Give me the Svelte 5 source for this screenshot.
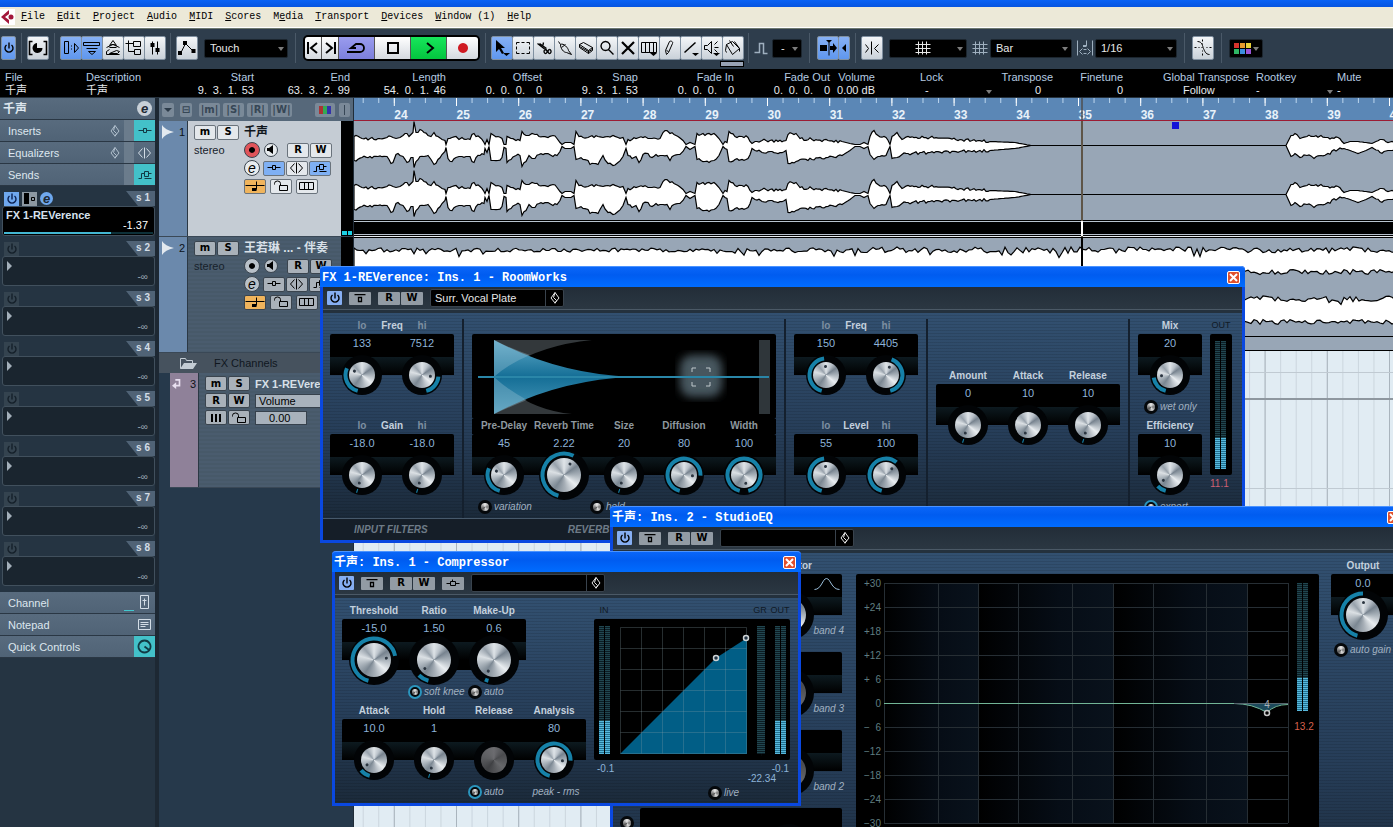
<script>
    const menus = ['File', 'Edit', 'Project', 'Audio', 'MIDI', 'Scores', 'Media', 'Transport', 'Devices', 'Window (1)', 'Help'];
    // index of the underlined access key
    const hot = { Media: 1 };

    // s = stroked path, f = filled path, k = stroke width
    const icons = {
        power: { w: 12, h: 12, s: 'M5.500 0v6M3 2.500a4 4 0 1 0 5 0', k: 1.4 },
        clock: { w: 20, h: 18, s: 'M4 2H1v13h3M15 2h3v13h-3', k: 1.6, f: 'M9 4a5 5 0 1 0 5.500 5H9z' },
        inspector: { w: 20, h: 18, s: 'M3 2h4v12H3zM10 6v1M10 9v1M13 4v9l4-4.500z' },
        infoline: { w: 20, h: 18, s: 'M1 3h16v3H1zM4 9h11M6 12h7l-3.500 3z' },
        overview: { w: 20, h: 18, s: 'M6 6l3.500-5L13 6l-2-1H8zM3 8l6.500-3L16 8M6 8h7M3 12l3-2M13 11l3 1-2 2H6zM3 15h13M3 12v3' },
        racks: { w: 20, h: 18, s: 'M4 1v11h6M1 4h3M4 4h5M9 2h7v5H9zM10 10h6v5h-6z' },
        faders: { w: 20, h: 18, s: 'M7 2v13M12 2v13', f: 'M5.500 4h4v4h-4zM10.500 9h4v4h-4z' },
        prefader: { w: 13, h: 11, s: 'M8 4h3v3H8z', f: 'M1 0h5v11H1z' },
        automation: { w: 20, h: 18, s: 'M3 14L8 4l8 8', f: 'M1 12h4v4H1zM6 2h4v4H6zM14.500 10h4v4h-4z' },
        prev: { w: 14, h: 14, s: 'M2 1v12M11 2L5 7l6 5', k: 2 },
        next: { w: 14, h: 14, s: 'M12 1v12M3 2l6 5-6 5', k: 2 },
        cycle: { w: 22, h: 12, s: 'M1 10h13a4 4 0 0 0 4-4a4 4 0 0 0-4-4h-4L5 6h5', k: 1.8 },
        stop: { w: 14, h: 14, s: 'M2 2h10v10H2z', k: 2 },
        play: { w: 14, h: 14, s: 'M5 2l6 5-6 5', k: 2 },
        rec: { w: 14, h: 14, f: 'M7 2a5 5 0 1 0 .01 0z' },
        arrow: { w: 20, h: 20, f: 'M4 2v12l3-3 3 5 2-1-3-5h4zM11 15h7l-3.500 3z' },
        range: { w: 20, h: 20, s: 'M3 4h3M8 4h3M13 4h3M3 15h3M8 15h3M13 15h3M3 4v2M3 8v3M3 13v2M16 4v2M16 8v3M16 13v2' },
        split: { w: 20, h: 20, s: 'M3 5l9 7M9 4l-1 5M11 11a1.500 2 0 1 0 .1 0M15 11a1.500 2 0 1 0 .1 0M5 5l7 5', k: 1.3 },
        glue: { w: 20, h: 20, s: 'M3 3l2 3M5 6c3-2 8 4 8 6l3 4-5-2c-3 0-6-4-6-8zM6 9l4-3' },
        erase: { w: 20, h: 20, s: 'M3 6l4-2 9 5-4 3zM3 6v3l9 6 4-3V9M12 12v3M3 8l9 5 4-2' },
        zoom: { w: 20, h: 20, s: 'M8 3a4.500 4.500 0 1 0 .01 0M11 11l5 5', k: 1.4 },
        mute: { w: 20, h: 20, s: 'M4 4l12 12M16 4L4 16', k: 2.2 },
        warp: { w: 20, h: 20, s: 'M2 4h15v10H2zM6 4v10M10 4v10M14 4v10', f: 'M11 15h7l-3.500 3z' },
        pencil: { w: 20, h: 20, s: 'M6 16l-1-4 4-9c1-1 4 0 3 2l-4 9zM6 12l2 1' },
        line: { w: 20, h: 20, s: 'M3 14L14 4', k: 1.5, f: 'M11 15h7l-3.500 3z' },
        listen: { w: 20, h: 20, s: 'M2 7h3l4-4v12l-4-4H2zM12 6l3-3M12 9h4M12 11l3 3', f: 'M11 15h7l-3.500 3z' },
        bucket: { w: 20, h: 20, s: 'M3 6l6-3 7 7-7 6zM3 6L2 12l1 2M6 2l4 6M11 3l5 7v3' },
        step: { w: 14, h: 16, s: 'M0 12h5V3h4v10h4', k: 1.5 },
        autoscroll: { w: 20, h: 18, s: 'M10.500 3v13', f: 'M2 6h7v6H2zM8 1h6l-3 3zM12 7h3V4l4 5-4 5v-3h-3z' },
        left: { w: 8, h: 14, f: 'M6 3v8L2 7z' },
        snap: { w: 18, h: 18, s: 'M8 2v13M2 5l3 4-3 4M15 5l-4 4 4 4' },
        hash: { w: 16, h: 16, s: 'M3 1v13M7 1v13M11 1v13M0 4h15M0 8h15M0 12h15' },
        quant: { w: 16, h: 18, s: 'M0 1v15M15 1v15M9 1v6M5 9l-3 3 3 3M10 9l3 3-3 3M6 10h3M6 14h3', f: 'M6 6h3v2H6z' },
        cross: { w: 20, h: 20, s: 'M4 3c5 0 5 5 6 7s2 6 6 6M1 9h2M5 9h1M8 9h1M13 9h1M16 9h2M9 1v2M9 5v1M9 12v1M9 15v2' },
        diamond: { w: 10, h: 12, s: 'M4.500 0l4 5.500-4 5-4-5zM4.500 0L3 5l3 3-1.500 3' },
        inserts: { w: 16, h: 8, s: 'M1 3h5M9 3h5M6 1h3v4H6z' },
        eq: { w: 16, h: 12, s: 'M7 0v11M5 1L1 5.500 5 10M9 1l4 4.500L9 10' },
        sends: { w: 16, h: 10, s: 'M1 8h3V3h3M7 1h4v5H7zM11 3h3M7 8h7' },
        bypass: { w: 14, h: 9, s: 'M1 0h11M5 3h3v4H5z', k: 1.3 },
        side: { w: 16, h: 9, s: 'M1 4h4M10 4h4M5 2h5v4H5zM7 0v2' },
        note: { w: 20, h: 12, s: 'M0 5h19M11 1v8', f: 'M7 8h4.500v3H7z' },
        lock: { w: 16, h: 12, s: 'M6 5h8v5H6zM7 5V3a3 2.500 0 0 0-6 0v1' },
        lanes: { w: 16, h: 9, s: 'M0 0h14v7H0zM5 0v7M9 0v7' },
        bars: { w: 10, h: 8, f: 'M0 0h2v8H0zM4 0h2v8H4zM8 0h2v8H8z' },
        speaker: { w: 10, h: 10, f: 'M1 3h2l4-3v9L3 6H1z' },
        dot: { w: 10, h: 10, f: 'M5 2a3 3 0 1 0 .01 0z' },
        strip: { w: 10, h: 15, s: 'M0 0h8v13H0zM4 3v7M2 5h4' },
        pad: { w: 14, h: 12, s: 'M0 0h12v10H0zM2 3h8M2 5h8M2 7h5' },
        quick: { w: 16, h: 16, s: 'M7.500 1.500a6 6 0 1 0 .01 0M7.500 7.500l4 3', k: 1.8 },
        folder: { w: 18, h: 13, s: 'M1 11V1h5l1 2h6v3', f: 'M5 6h13l-4 6H1z' },
        fxret: { w: 12, h: 14, s: 'M4 2h5v7H4', k: 2, f: 'M0 9l5-4v8z' },
        bell: { w: 26, h: 14, s: 'M0 12c7 0 8-11 12-11s5 11 13 11' }
    };

    const views = ['inspector', 'infoline', 'overview', 'racks', 'faders'];
    const tools = ['arrow', 'range', 'split', 'glue', 'erase', 'zoom', 'mute', 'warp', 'pencil', 'line', 'listen', 'bucket'];
    const swatches = ['#d8342c', '#e79a2c', '#e8d038', '#2fb765', '#3b8fe0', '#9a55d8'];

    const times = [
        ['Start', '9.', '3.', '1.', '53'],
        ['End', '63.', '3.', '2.', '99'],
        ['Length', '54.', '0.', '1.', '46'],
        ['Offset', '0.', '0.', '0.', '0'],
        ['Snap', '9.', '3.', '1.', '53'],
        ['Fade In', '0.', '0.', '0.', '0'],
        ['Fade Out', '0.', '0.', '0.', '0']
    ];

    const slots = [1, 2, 3, 4, 5, 6, 7, 8];
    const tracks = [
        { n: 1, name: '千声', on: true },
        { n: 2, name: '王若琳 ... - 伴奏', on: false }
    ];

    // ruler
    const BAR = 62.2;
    const bars = Array.from({ length: 17 }, (_, i) => ({ n: 24 + i, x: 40.3 + i * BAR }));
    const beats = Array.from({ length: 76 }, (_, i) => 40.3 - BAR + (i * BAR) / 4);

    // vocal envelope: x, height above, height below the centre line
    const env = [
        0,9,15, 8,7,12, 16,7,11, 24,7,11, 33,8,11, 37,9,18, 39,8,17, 42,7,9, 46,8,10, 49,10,11, 53,12,17, 55,9,16, 57,11,12,
        59,13,12, 60,24,22, 62,13,16, 66,16,11, 70,13,11, 74,10,10, 77,9,14, 80,13,19, 84,9,14, 88,6,9, 91,5,6, 92,1,2, 94,7,13,
        98,8,16, 102,9,12, 105,6,11, 108,8,11, 112,6,11, 116,6,11, 118,11,16, 120,12,17, 122,9,12, 126,8,10, 130,3,9, 131,1,3,
        133,6,7, 135,1,1, 137,12,15, 140,10,15, 144,9,15, 148,7,12, 150,1,2, 152,1,3, 153,9,17, 157,7,14, 162,5,10, 166,5,10,
        168,14,21, 172,10,16, 175,10,10, 178,12,13, 181,11,13, 185,9,9, 189,9,9, 194,8,8, 199,10,11, 203,7,10, 206,3,6, 208,1,1,
        211,3,3, 217,3,3, 220,1,1, 222,14,14, 225,9,13, 229,8,14, 234,8,15, 236,9,19, 240,8,18, 244,9,19, 249,8,10, 254,9,18,
        259,10,20, 264,8,17, 269,8,11, 272,1,3, 274,6,10, 278,6,13, 282,7,11, 285,8,17, 289,8,9, 294,7,8, 298,7,12, 302,7,9,
        306,7,10, 309,13,10, 313,15,10, 316,12,15, 320,11,10, 324,9,9, 329,5,6, 332,1,1, 336,3,4, 341,1,1, 343,12,14, 347,11,15,
        351,10,16, 355,12,17, 360,12,15, 365,7,10, 369,1,1, 371,4,3, 373,3,4, 375,14,16, 381,9,14, 388,9,14, 394,8,13, 398,2,3,
        401,4,5, 408,5,7, 416,5,6, 424,4,8, 432,5,5, 434,11,18, 438,12,17, 442,12,16, 446,7,14, 458,6,14, 474,5,12, 488,4,10,
        496,2,5, 501,1,1, 506,1,1, 510,3,3, 514,1,1, 516,9,9, 520,15,14, 524,10,11, 532,8,10, 536,1,1, 538,9,13, 543,13,12,
        548,6,9, 554,9,8, 576,8,7, 606,6,6, 636,4,5, 661,3,3, 677,0,0, 932,0,0, 937,10,11, 941,12,8, 946,7,12, 953,9,10,
        960,9,13, 967,10,10, 974,8,8, 984,8,4, 990,2,3, 996,4,5, 1004,4,8, 1012,3,5, 1018,2,2, 1026,6,7, 1034,3,5, 1046,6,5,
        1060,8,8, 1090,5,6, 1120,7,9, 1160,4,5, 1200,6,7
    ];

    const noise = (i) => {
        const v = Math.sin(i * 12.9898) * 43758.5453;
        return v - Math.floor(v) - 0.5;
    };

    function vocal(cy) {
        const up = [];
        const down = [];
        let k = 0;
        for (let i = 0; i < env.length; i += 3) {
            const [x, u, d] = [env[i], env[i + 1], env[i + 2]];
            up.push([x, cy - u]);
            down.push([x, cy + d]);
            const nx = env[i + 3];
            if (nx === undefined) break;
            for (let m = x + 2; m < nx - 1; m += 2) {
                const t = (m - x) / (nx - x);
                const uu = u + (env[i + 4] - u) * t;
                const dd = d + (env[i + 5] - d) * t;
                const j = uu > 4 ? 3 : 0;
                up.push([m, cy - uu + noise(k++) * j]);
                down.push([m, cy + dd + noise(k++) * j]);
            }
        }
        return 'M' + [...up, ...down.reverse()].map((p) => p[0] + ' ' + p[1].toFixed(1)).join('L') + 'Z';
    }

    function backing(top, bottom, seed) {
        const up = [];
        const down = [];
        for (let x = 0; x < 1300; x += 3) {
            const s = x + seed;
            const spike = noise(s * 3) > 0.42 ? 5 : 0;
            const rough = x > 440 ? 6 : 4;
            up.push([x, top + noise(s) * rough + spike]);
            down.unshift([x, bottom + noise(s * 7) * 5]);
        }
        return 'M' + [...up, ...down].map((p) => p[0] + ' ' + p[1].toFixed(1)).join('L') + 'Z';
    }

    // knobs travel 330 degrees, starting left of six o'clock
    const angle = (v) => 195 + v * 330;
    function arc(r, a, b) {
        const p = (v) => {
            const t = (angle(v) * Math.PI) / 180;
            return (30 + r * Math.sin(t)).toFixed(2) + ' ' + (30 - r * Math.cos(t)).toFixed(2);
        };
        return `M${p(a)}A${r} ${r} 0 ${(b - a) * 330 > 180 ? 1 : 0} 1 ${p(b)}`;
    }

    const db = [30, 24, 18, 12, 6, 0, -6, -12, -18, -24, -30];
    const freqLines = [28, 82, 122, 162, 216, 257, 297, 350, 391, 432];
</script>

{#snippet ic(name)}
    {@const i = icons[name]}
    <svg class="ic" width={i.w} height={i.h} viewBox="0 0 {i.w} {i.h}" aria-hidden="true">
        {#if i.s}<path d={i.s} fill="none" stroke="currentColor" stroke-width={i.k ?? 1} transform={(i.k ?? 1) < 1.7 ? 'translate(.5 .5)' : undefined} />{/if}
        {#if i.f}<path d={i.f} fill="currentColor" />{/if}
    </svg>
{/snippet}

{#snippet drop(label, value, cls)}
    <span class="drop {cls}">
        <select aria-label={label}><option>{value}</option></select>
    </span>
{/snippet}

{#snippet knob(label, value, v, o = {})}
    <div class="cell">
        <span class="val">{value}</span>
        <div class="knob" class:big={o.big} role="slider" tabindex="0" aria-label={label} aria-valuenow={v * 100} aria-valuetext={value}>
            <svg width="60" height="60" viewBox="0 0 60 60">
                <circle cx="30" cy="30" r={o.big ? 25 : 20} fill="#020406" />
                {#if !o.off}
                    <path d={arc(o.big ? 21.5 : 16.5, o.rev ? v : 0, o.rev ? 1 : Math.max(v, 0.012))} fill="none" stroke="#1681a8" stroke-width="4" />
                {/if}
            </svg>
            <div class="metal" class:off={o.off}>
                {#if !o.off}<i style="transform: rotate({angle(v)}deg)"></i>{/if}
            </div>
        </div>
    </div>
{/snippet}

{#snippet opt(text, on, cls = '')}
    <label class="opt {cls}"><input type="checkbox" checked={on} />{text}</label>
{/snippet}

{#snippet meter(x, y, h, lit, n = 2)}
    {#each n === 2 ? [x + 2.5, x + 8.5] : [x + 4] as cx}
        <path d="M{cx} {y}v{h}" stroke="#0c1d24" stroke-width={n === 2 ? 5 : 8} />
        <path d="M{cx} {y}v{h}" stroke="#214750" stroke-width={n === 2 ? 5 : 8} stroke-dasharray="1 1" />
        <path d="M{cx} {y + h - lit}v{lit}" stroke="#22708f" stroke-width="5" />
        <path d="M{cx} {y + h - lit}v{lit}" stroke="#58b8dc" stroke-width="5" stroke-dasharray="1 1" />
    {/each}
{/snippet}

{#snippet chrome(title, preset, side)}
    <header class="title">
        <h2>{title}</h2>
        <button class="close" aria-label="Close"><svg width="9" height="9" viewBox="0 0 9 9"><path d="M1 1l7 7M8 1L1 8" stroke="#fff" stroke-width="2" /></svg></button>
    </header>
    <div class="plugbar">
        <button class="mini blue sq" aria-label="Power">{@render ic('power')}</button>
        <button class="mini" aria-label="Bypass">{@render ic('bypass')}</button>
        <div class="pair">
            <button class="mini">R</button>
            <button class="mini">W</button>
        </div>
        {#if side}<button class="mini" aria-label="Side-chain">{@render ic('side')}</button>{/if}
        <span class="preset">
            <select aria-label="Preset"><option>{preset}</option></select>
            <span>{@render ic('diamond')}</span>
        </span>
    </div>
{/snippet}

<div class="app">
    <div class="winedge"></div>
    <nav class="menu">
        <svg width="15" height="16" viewBox="0 0 15 16" aria-hidden="true">
            <path d="M0 0h15v16H0z" fill="#fff" />
            <path d="M9 1L1 8l8 7V11L5 8l4-3z" fill="#a3173a" />
            <circle cx="11" cy="8" r="2.500" fill="#a3173a" />
        </svg>
        {#each menus as m}
            {@const k = hot[m] ?? 0}
            <a href="#{m}">{m.slice(0, k)}<u>{m[k]}</u>{m.slice(k + 1)}</a>
        {/each}
    </nav>

    <div class="toolbar">
        <button class="tb blue slim" aria-label="Activate project">{@render ic('power')}</button>
        <i class="sep"></i>
        <button class="tb" aria-label="Constrain delay">{@render ic('clock')}</button>
        <i class="sep"></i>
        <div class="set">
            {#each views as v, i}
                <button class="tb" class:blue={i < 2} aria-label={v}>{@render ic(v)}</button>
            {/each}
        </div>
        <i class="sep"></i>
        <button class="tb" aria-label="Automation panel">{@render ic('automation')}</button>
        {@render drop('Automation mode', 'Touch', 'w84 ml')}
        <i class="sep wide"></i>
        <div class="transport">
            <button class="half" aria-label="Previous">{@render ic('prev')}</button>
            <button class="half" aria-label="Next">{@render ic('next')}</button>
            <button class="cycle" aria-label="Cycle">{@render ic('cycle')}</button>
            <button aria-label="Stop">{@render ic('stop')}</button>
            <button class="play" aria-label="Play">{@render ic('play')}</button>
            <button class="rec" aria-label="Record">{@render ic('rec')}</button>
        </div>
        <i class="sep"></i>
        <div class="set tools">
            {#each tools as t, i}
                <button class="tb" class:blue={i === 0} aria-label={t}>{@render ic(t)}</button>
            {/each}
        </div>
        <i class="sep"></i>
        {@render ic('step')}
        {@render drop('Nudge', '-', 'w30 dash')}
        <i class="sep wide"></i>
        <div class="set">
            <button class="tb blue" aria-label="Auto-scroll">{@render ic('autoscroll')}</button>
            <button class="tb blue thin" aria-label="Suspend auto-scroll">{@render ic('left')}</button>
        </div>
        <i class="sep"></i>
        <button class="tb" aria-label="Snap">{@render ic('snap')}</button>
        <button class="drop pick w78 ml" aria-label="Snap type" aria-haspopup="listbox">{@render ic('hash')}</button>
        <span class="pre">{@render ic('hash')}</span>
        {@render drop('Grid type', 'Bar', 'w82')}
        <span class="pre">{@render ic('quant')}</span>
        {@render drop('Quantize', '1/16', 'w82')}
        <i class="sep wide"></i>
        <button class="tb" aria-label="Zero crossings">{@render ic('cross')}</button>
        <i class="sep wide"></i>
        <button class="drop pick w34" aria-label="Colors" aria-haspopup="listbox">
            <span class="swatches">{#each swatches as c}<b style="background: {c}"></b>{/each}</span>
        </button>
    </div>

    <dl class="info">
        <div class="file"><dt>File</dt><dd>千声</dd></div>
        <div class="desc"><dt>Description</dt><dd>千声</dd></div>
        {#each times as t}
            <div class="time"><dt>{t[0]}</dt><dd>{#each t.slice(1) as p}<span>{p}</span>{/each}</dd></div>
        {/each}
        <div class="vol"><dt>Volume</dt><dd>0.00 dB</dd></div>
        <div class="lockc more"><dt>Lock</dt><dd>-</dd></div>
        <div class="trans"><dt>Transpose</dt><dd>0</dd></div>
        <div class="fine"><dt>Finetune</dt><dd>0</dd></div>
        <div class="glob"><dt>Global Transpose</dt><dd>Follow</dd></div>
        <div class="root more"><dt>Rootkey</dt><dd>-</dd></div>
        <div class="mutec"><dt>Mute</dt><dd>-</dd></div>
    </dl>

    <div class="work">
        <aside class="inspector">
            <div class="row name"><b>千声</b><button class="e" aria-label="Edit channel">e</button></div>
            <div class="row">Inserts{@render ic('diamond')}<i></i><span class="tag teal">{@render ic('inserts')}</span></div>
            <div class="row">Equalizers{@render ic('diamond')}<i></i><span class="tag">{@render ic('eq')}</span></div>
            <div class="row">Sends<i></i><span class="tag teal">{@render ic('sends')}</span></div>
            <div class="slots">
                {#each slots as s}
                    <section class="slot" class:used={s === 1}>
                        <header>
                            <button class="pw" aria-label="Send {s} power">{@render ic('power')}</button>
                            {#if s === 1}
                                <button class="pw pf" aria-label="Pre-fader">{@render ic('prefader')}</button>
                                <button class="e blue" aria-label="Edit send">e</button>
                            {/if}
                            <span class="num">s {s}</span>
                        </header>
                        <div class="box">
                            {#if s === 1}
                                <b>FX 1-REVerence</b><span>-1.37</span>
                                <div class="level"><i></i></div>
                            {:else}
                                <em></em><small>-∞</small>
                            {/if}
                        </div>
                    </section>
                {/each}
            </div>
            <div class="row">Channel<u></u><span class="tag">{@render ic('strip')}</span></div>
            <div class="row">Notepad<span class="tag">{@render ic('pad')}</span></div>
            <div class="row">Quick Controls<span class="tag teal">{@render ic('quick')}</span></div>
        </aside>

        <section class="tracks">
            <div class="thead">
                <button class="gh tri" aria-label="Track menu"></button>
                <button class="gh" aria-label="List">⊟</button>
                {#each ['m', 'S', 'R', 'W'] as g}<button class="gh wd">|{g}|</button>{/each}
                <button class="gh col" aria-label="Track colors"><b class="r"></b><b class="g"></b><b class="b"></b></button>
                <button class="gh nar" aria-label="Divide"><i></i></button>
            </div>
            {#each tracks as t}
                <article class="track" class:sel={t.on}>
                    <div class="stripe">
                        <svg width="14" height="14" viewBox="0 0 14 14"><path d="M1 0q3 5 12 7q-9 2-12 7z" fill="#e3e9ef" /></svg>
                        {t.n}
                    </div>
                    <div class="ctl">
                        <div class="ln"><div class="lead"><button class="tk">m</button><button class="tk">S</button></div><b>{t.name}</b></div>
                        <div class="ln">
                            <span class="lead">stereo</span>
                            <button class="rd red" aria-label="Record enable">{@render ic('dot')}</button>
                            <button class="rd sp" aria-label="Monitor">{@render ic('speaker')}</button>
                            <button class="tk">R</button><button class="tk">W</button>
                        </div>
                        <div class="ln">
                            <span class="lead"></span>
                            <button class="rd ee" aria-label="Edit channel">e</button>
                            <button class="tk act" aria-label="Inserts">{@render ic('inserts')}</button>
                            <button class="tk" aria-label="EQ">{@render ic('eq')}</button>
                            <button class="tk act" aria-label="Sends">{@render ic('sends')}</button>
                        </div>
                        <div class="ln sparse">
                            <span class="lead"></span>
                            <button class="tk orange" aria-label="Time base">{@render ic('note')}</button>
                            <button class="tk" aria-label="Lock">{@render ic('lock')}</button>
                            <button class="tk" aria-label="Lanes">{@render ic('lanes')}</button>
                        </div>
                    </div>
                    <div class="vu"></div>
                </article>
            {/each}
            <div class="fxhead"><span>{@render ic('folder')}</span>FX Channels</div>
            <article class="track fx">
                <div class="stripe">{@render ic('fxret')}3</div>
                <div class="ctl">
                    <div class="ln"><button class="tk">m</button><button class="tk">S</button><b>FX 1-REVerence</b></div>
                    <div class="ln"><button class="tk">R</button><button class="tk">W</button><span class="param">Volume</span></div>
                    <div class="ln"><button class="tk" aria-label="Lanes">{@render ic('bars')}</button><button class="tk" aria-label="Lock">{@render ic('lock')}</button><span class="param num">0.00</span></div>
                </div>
            </article>
        </section>

        <section class="arrange">
            <svg class="ruler" width="100%" height="24">
                {#each beats as x}<path d="M{x} 0v5" stroke="#bcd6ee" />{/each}
                {#each bars as b}
                    <path d="M{b.x} 0v8" stroke="#fff" />
                    <text x={b.x} y="21">{b.n}</text>
                {/each}
                <path d="M728 0v22" stroke="#4d4a48" stroke-width="2" stroke-opacity=".7" />
                <rect y="22" width="100%" height="1" fill="#9c1c33" />
            </svg>
            <svg class="lanes" width="100%" height="100%">
                <rect width="100%" height="231" fill="#98a6b6" />
                <path d={vocal(24.5)} fill="#fff" stroke="#000" stroke-width="1.200" />
                <path d={vocal(73.5)} fill="#fff" stroke="#000" stroke-width="1.200" />
                <rect y="99" width="100%" height="18" fill="#000" />
                <rect y="100" width="100%" height="1" fill="#b8c2cd" />
                <rect y="113" width="100%" height="1" fill="#b8c2cd" />
                <rect y="115" width="100%" height="1" fill="#e8ecf0" />
                <path d={backing(129, 151, 0)} fill="#fff" stroke="#000" stroke-width="1.200" />
                <path d={backing(178, 201, 90)} fill="#fff" stroke="#000" stroke-width="1.200" />
                <rect y="215" width="100%" height="1" fill="#000" />
                <rect y="229" width="100%" height="1" fill="#000" />
                <rect y="230" width="100%" height="100%" fill="#e1ecf3" />
                {#each beats as x}<path d="M{x} 230v900" stroke="#cbd6de" />{/each}
                {#each bars as b}<path d="M{b.x} 230v900" stroke="#a9b4bd" />{/each}
                <rect y="251" width="100%" height="1" fill="#c0cad2" />
                <rect y="277" width="100%" height="2" fill="#8e979f" />
                <rect y="367" width="100%" height="1" fill="#c0cad2" />
                <rect x="818" y="1" width="7" height="7" fill="#1414d8" />
                <path d="M728 0v1000" stroke="#5e5548" stroke-width="2" />
                <path d="M728 100v15" stroke="#fff" stroke-width="2" />
                <path d="M728 116v30" stroke="#000" stroke-width="2" />
            </svg>
        </section>
    </div>

    <section class="win room">
        {@render chrome('FX 1-REVerence: Ins. 1 - RoomWorks', 'Surr. Vocal Plate', false)}
        <div class="face">
            <div class="col">
                <div class="labels"><span class="dim">lo</span><span class="mid">Freq</span><span class="dim">hi</span></div>
                <div class="panel">{@render knob('Freq lo', '133', 0.3)}{@render knob('Freq hi', '7512', 0.79, { rev: true })}</div>
                <div class="opts"></div>
                <div class="labels"><span class="dim">lo</span><span class="mid">Gain</span><span class="dim">hi</span></div>
                <div class="panel">{@render knob('Gain lo', '-18.0', 0)}{@render knob('Gain hi', '-18.0', 0)}</div>
            </div>
            <i class="rule"></i>
            <div class="col">
                <div class="labels"></div>
                <svg class="space" width="304" height="85" viewBox="0 0 304 85">
                    <defs>
                        <linearGradient id="tail" x1="0" y1="0" x2="0" y2="1"><stop offset="0" stop-color="#5fa9c8" /><stop offset=".5" stop-color="#146e96" /><stop offset="1" stop-color="#4b9abb" /></linearGradient>
                        <filter id="haze"><feGaussianBlur stdDeviation="4" /></filter>
                    </defs>
                    <path d="M22 6h98Q60 12 22 43Q55 76 100 80H22z" fill="#33383b" />
                    <path d="M22 6Q85 40 160 43Q85 46 22 80z" fill="url(#tail)" />
                    <path d="M22 6v37Q36 30 58 21Q40 15 22 6zM22 80Q40 72 55 66Q36 56 22 43z" fill="#9cc4d4" fill-opacity=".35" />
                    <rect x="208" y="21" width="42" height="42" rx="12" fill="#46565e" filter="url(#haze)" />
                    <rect x="287" y="6" width="11" height="74" fill="#2f363a" />
                    <path d="M6 43h291" stroke="#2a86a8" stroke-width="2" />
                    <path d="M220 38v-4h4M234 34h4v4M238 48v4h-4M224 52h-4v-4" fill="none" stroke="#c0c8cc" />
                </svg>
                <div class="labels on"><span>Pre-Delay</span><span>Reverb Time</span><span>Size</span><span>Diffusion</span><span>Width</span></div>
                <div class="panel">
                    {@render knob('Pre-Delay', '45', 0.3)}
                    {@render knob('Reverb Time', '2.22', 0.58, { big: true })}
                    {@render knob('Size', '20', 0)}
                    {@render knob('Diffusion', '80', 0.78)}
                    {@render knob('Width', '100', 1)}
                </div>
                <div class="opts">{@render opt('variation', false, 'far')}{@render opt('hold', false)}</div>
            </div>
            <i class="rule"></i>
            <div class="col">
                <div class="labels"><span class="dim">lo</span><span class="mid">Freq</span><span class="dim">hi</span></div>
                <div class="panel">{@render knob('Freq lo', '150', 0.48)}{@render knob('Freq hi', '4405', 0.56, { rev: true })}</div>
                <div class="opts"></div>
                <div class="labels"><span class="dim">lo</span><span class="mid">Level</span><span class="dim">hi</span></div>
                <div class="panel">{@render knob('Level lo', '55', 0.48)}{@render knob('Level hi', '100', 0.62)}</div>
            </div>
            <i class="rule"></i>
            <div class="col low">
                <div class="labels"><span>Amount</span><span>Attack</span><span>Release</span></div>
                <div class="panel">{@render knob('Amount', '0', 0)}{@render knob('Attack', '10', 0)}{@render knob('Release', '10', 0)}</div>
            </div>
            <i class="rule"></i>
            <div class="col">
                <div class="labels"><span>Mix</span></div>
                <div class="panel">{@render knob('Mix', '20', 0.2)}</div>
                <div class="opts">{@render opt('wet only', false)}</div>
                <div class="labels"><span>Efficiency</span></div>
                <div class="panel">{@render knob('Efficiency', '10', 0.1)}</div>
                <div class="opts">{@render opt('export', true)}</div>
            </div>
            <div class="col">
                <div class="labels lcd">OUT</div>
                <svg class="blk" width="22" height="141">{@render meter(5, 7, 128, 31)}</svg>
                <span class="peak">11.1</span>
            </div>
        </div>
        <footer><span>INPUT FILTERS</span><span>REVERB</span></footer>
    </section>

    <section class="win eqw">
        {@render chrome('千声: Ins. 2 - StudioEQ', '', false)}
        <div class="face">
            <div class="bands">
                {#each [4, 3, 2, 1] as b}
                    <div class="labels">{b === 4 ? 'tor' : ''}</div>
                    <div class="brow">
                        <label class="opt"><input type="checkbox" aria-label="Band {b} on" checked={b === 4} /></label>
                        <div class="panel">
                            {@render knob('Band ' + b, '', 0.5, { big: true, off: b < 4 })}
                            <span class="shape">{#if b === 4}{@render ic('bell')}{/if}</span>
                        </div>
                    </div>
                    <span class="bn">band {b}</span>
                {/each}
            </div>
            <svg class="graph" height="330" aria-label="Equalizer curve">
                <defs>
                    <linearGradient id="band"><stop offset="0" stop-color="#000" /><stop offset=".6" stop-color="#060d16" /><stop offset="1" stop-color="#09121c" /></linearGradient>
                </defs>
                <rect width="100%" height="100%" rx="2" fill="#000" />
                <rect x="28" y="9" width="94" height="240" fill="url(#band)" />
                <rect x="122" y="9" width="135" height="240" fill="url(#band)" />
                <rect x="257" y="9" width="134" height="240" fill="url(#band)" />
                {#each freqLines as x}<path d="M{x + 0.5} 9v240" stroke="#262e34" />{/each}
                {#each db as v, i}
                    <path d="M28 {9.5 + i * 24}h404" stroke="#262e34" />
                    <text x="25" y={13 + i * 24} text-anchor="end">{v > 0 ? '+' : v < 0 ? '−' : ''}{Math.abs(v) < 10 && v ? '  ' : ''}{Math.abs(v)}</text>
                {/each}
                <path d="M380 130q18 0 31 9q8-9 21-9z" fill="#1d4a5c" />
                <path d="M28 129.500h350q18 0 33 9q8-8 21-8" fill="none" stroke="#72b596" />
                <path d="M378 129.500h54" stroke="#56656e" />
                <text class="pt" x="411" y="134" text-anchor="middle">4</text>
                <circle cx="411" cy="139" r="2.500" fill="#000" stroke="#c8c8c8" stroke-width="1.500" />
                {@render meter(441, 9, 128, 33)}
                <text class="pk" x="448" y="156" text-anchor="middle">13.2</text>
            </svg>
            <div class="col">
                <div class="labels"><span>Output</span></div>
                <div class="panel">{@render knob('Output', '0.0', 0.5, { big: true })}</div>
                <div class="opts tight">{@render opt('auto gain', false)}</div>
            </div>
        </div>
    </section>

    <section class="win comp">
        {@render chrome('千声: Ins. 1 - Compressor', '', true)}
        <div class="face">
            <div class="col">
                <div class="labels left"><span>Threshold</span><span>Ratio</span><span>Make-Up</span></div>
                <div class="panel bigs">
                    {@render knob('Threshold', '-15.0', 0.74, { big: true })}
                    {@render knob('Ratio', '1.50', 0.09, { big: true })}
                    {@render knob('Make-Up', '0.6', 0.03, { big: true })}
                </div>
                <div class="opts"><i></i>{@render opt('soft knee', true)}{@render opt('auto', false)}</div>
                <div class="labels left"><span>Attack</span><span>Hold</span><span>Release</span><span>Analysis</span></div>
                <div class="panel">
                    {@render knob('Attack', '10.0', 0.11)}
                    {@render knob('Hold', '1', 0)}
                    {@render knob('Release', '', 0, { off: true })}
                    {@render knob('Analysis', '80', 0.78)}
                </div>
                <div class="opts"><i></i><i></i>{@render opt('auto', true)}<span class="peakrms">peak - rms</span></div>
            </div>
            <div class="dyn">
                <div class="labels lcd"><span>IN</span><span>GR</span><span>OUT</span></div>
                <svg class="blk" width="196" height="141" aria-label="Compressor curve">
                    {@render meter(5, 7, 128, 33)}
                    <path d="M26 135L122 39L153 19V135z" fill="#015e86" />
                    {#each [0, 1, 2, 3, 4, 5, 6] as g}
                        <path d="M{26.5 + g * 21} 8.500v126M26.500 {8.5 + g * 21}h126" stroke="#8aa0a8" stroke-opacity=".28" />
                    {/each}
                    <circle cx="122" cy="39" r="2.500" fill="#234" stroke="#cfd3d5" stroke-width="1.500" />
                    <circle cx="152" cy="19" r="2.500" fill="#234" stroke="#cfd3d5" stroke-width="1.500" />
                    {@render meter(163, 7, 128, 0, 1)}
                    {@render meter(181, 7, 128, 33)}
                </svg>
                <div class="reads"><span>-0.1</span><span>-0.1</span></div>
                <div class="gr">-22.34</div>
                <div class="opts">{@render opt('live', false)}</div>
            </div>
        </div>
    </section>
</div>

<style>
    :global(body) {
        background: #26394b;
    }

    .app {
        position: relative;
        display: flex;
        flex-direction: column;
        height: 100vh;
        overflow: hidden;
        font: 11px/14px "Liberation Sans", "Noto Sans CJK SC", sans-serif;
        color: #d3dde6;
        background: #26394b;
    }

    .app :global(*) {
        box-sizing: border-box;
    }

    button, select, input {
        margin: 0;
        padding: 0;
        border: 0;
        font: inherit;
        color: inherit;
        background: none;
        appearance: none;
    }

    button {
        display: flex;
        align-items: center;
        justify-content: center;
        flex: none;
    }

    .ic {
        flex: none;
    }

    .winedge {
        height: 7px;
        flex: none;
        background: linear-gradient(#0a62f5, #0654e0);
    }

    .menu {
        display: flex;
        align-items: center;
        gap: 12px;
        height: 21px;
        flex: none;
        background: #ece9d8;
        border-bottom: 1px solid #fff;
        font: 10px/14px "Liberation Mono", monospace;
    }

    .menu svg {
        margin-right: -6px;
    }

    .menu a {
        color: #000;
        text-decoration: none;
    }

    /* toolbar */
    .toolbar {
        display: flex;
        align-items: center;
        height: 41px;
        flex: none;
        padding: 0 0 2px 1px;
        border-top: 1px solid #6f7a70;
        background: #2e3d4c;
        color: #9fb0bf;
    }

    .toolbar > * {
        flex: none;
    }

    .tb {
        width: 22px;
        height: 24px;
        color: #000;
        border: 1px solid #8090a0;
        border-radius: 2px;
        background: linear-gradient(#f4f6f8, #c9d1d9);
    }

    .tb.blue {
        background: linear-gradient(#86b0f4, #5f97ee);
    }

    .tb.slim {
        width: 15px;
    }

    .tb.thin {
        width: 12px;
    }

    .set {
        display: flex;
    }

    .set .tb {
        margin-right: -1px;
    }

    .set .thin {
        margin-right: 0;
    }

    .tools {
        position: relative;
    }

    .tools::after {
        content: "";
        position: absolute;
        right: -1px;
        top: 25px;
        width: 22px;
        height: 4px;
        border: 1px solid #000;
        background: #98a3b5;
    }

    .sep {
        width: 1px;
        height: 30px;
        margin: 0 5px;
        background: #4a5968;
    }

    .sep.wide {
        margin: 0 7px;
    }

    .drop {
        position: relative;
        height: 19px;
        border: 1px solid #1c262f;
        border-radius: 2px;
        background: #000;
        color: #e8e8e8;
    }

    .drop::after, .more::after {
        content: "";
        position: absolute;
        right: 3px;
        top: 7px;
        border: 3px solid transparent;
        border-top: 4px solid #7c7c7c;
        border-bottom: 0;
    }

    .drop select {
        width: 100%;
        height: 17px;
        padding-left: 5px;
    }

    .dash {
        margin-left: 4px;
    }

    .dash select {
        padding-left: 8px;
    }

    .ml {
        margin-left: 6px;
    }

    .w84 { width: 84px; }
    .w82 { width: 82px; }
    .w78 { width: 78px; padding-right: 10px; }
    .w34 { width: 34px; padding-right: 8px; }
    .w30 { width: 30px; }

    .pre {
        display: flex;
        margin: 0 2px 0 5px;
    }

    .swatches {
        display: grid;
        grid-template-columns: repeat(3, 5px);
        gap: 1px;
    }

    .swatches b {
        height: 5px;
    }

    .transport {
        display: flex;
        height: 26px;
        border: 2px solid #000;
        border-radius: 5px;
        overflow: hidden;
        color: #000;
    }

    .transport button {
        width: 36px;
        border-right: 1px solid #555;
        background: linear-gradient(#fff, #d4d9df);
    }

    .transport .half { width: 17px; }
    .transport .cycle { background: linear-gradient(#9a9cee, #7c7fdc); }
    .transport .play { background: linear-gradient(#17e65b, #04c53f); }
    .transport .rec { width: 31px; color: #cf1a22; border: 0; }

    /* info line */
    .info {
        display: flex;
        flex: none;
        height: 29px;
        margin: 0;
        padding-top: 2px;
        line-height: 13px;
        background: #000;
        border-bottom: 1px solid #26323d;
        color: #b6cbe0;
        white-space: nowrap;
    }

    .info div {
        position: relative;
        flex: none;
    }

    .info dd {
        margin: 0;
        color: #e6eaee;
    }

    .file { width: 86px; padding-left: 5px; }
    .desc { width: 72px; }
    .time { width: 96px; text-align: right; }

    .time dd {
        display: grid;
        grid-template-columns: 1fr 15px 15px 17px;
    }

    .vol { width: 45px; text-align: right; }
    .lockc { width: 121px; padding-left: 45px; }
    .lockc dd { padding-left: 5px; }
    .trans { width: 57px; text-align: right; }
    .trans dd { padding-right: 12px; }
    .fine { width: 70px; text-align: right; }
    .glob { width: 133px; padding-left: 40px; }
    .glob dd { padding-left: 20px; }
    .root { width: 81px; }
    .more::after { top: 19px; right: 4px; }

    .work {
        display: flex;
        flex: 1;
        min-height: 0;
    }

    /* inspector */
    .inspector {
        width: 159px;
        flex: none;
        border-right: 4px solid #1d2833;
        background: #253442;
    }

    .row {
        display: flex;
        align-items: center;
        height: 22px;
        padding-left: 8px;
        border-bottom: 1px solid #2a3744;
        background: linear-gradient(#586b7e, #506376);
        color: #dde6ee;
    }

    .row .ic {
        margin-left: auto;
        color: #b0bfcc;
    }

    .row i {
        width: 10px;
        height: 21px;
        margin-left: 4px;
        background: #6b7c8c;
    }

    .row > i:nth-last-child(2):first-child {
        margin-left: auto;
    }

    .row u {
        width: 10px;
        height: 1px;
        margin: 16px 0 0 auto;
        background: #41c8cf;
    }

    .row u + .tag {
        margin-left: 0;
    }

    .tag {
        display: grid;
        place-items: center;
        width: 21px;
        height: 21px;
        margin-left: auto;
    }

    .row i + .tag {
        margin-left: 0;
    }

    .row .tag .ic {
        margin: 0;
        color: #d3dde6;
    }

    .teal {
        background: #43c1c9;
    }

    .row .teal .ic {
        color: #123a44;
    }

    .name {
        padding: 0 3px 0 3px;
        justify-content: space-between;
        font-size: 12px;
    }

    .e {
        width: 15px;
        height: 15px;
        border-radius: 8px;
        background: #c8d0d8;
        color: #1d2833;
        font: italic bold 13px/13px "Liberation Sans", sans-serif;
    }

    .e.blue {
        width: 13px;
        height: 13px;
        background: #6fa8ee;
    }

    .slots {
        height: 406px;
    }

    .slot {
        height: 50px;
        padding: 5px 0 0 2px;
    }

    .slot header {
        display: flex;
        align-items: center;
        gap: 3px;
        height: 15px;
        padding-left: 2px;
    }

    .pw {
        width: 15px;
        height: 14px;
        background: #34434f;
        color: #15202a;
    }

    .used .pw {
        background: #6fa8ee;
        color: #0a2050;
    }

    .used .pf {
        background: #8c98a2;
        color: #000;
    }

    .num {
        margin-left: auto;
    }

    .slot .num {
        width: 29px;
        height: 15px;
        padding-right: 5px;
        text-align: right;
        font-weight: bold;
        font-size: 10px;
        background: #506376;
        clip-path: polygon(0 0, 100% 0, 100% 100%, 12px 100%);
    }

    .box {
        position: relative;
        display: flex;
        justify-content: space-between;
        height: 30px;
        padding: 2px 6px 0 4px;
        border: 1px solid #41505d;
        border-radius: 3px;
        background: #1a252f;
        color: #93a1ad;
    }

    .used .box {
        display: block;
        padding-left: 3px;
        background: #000;
        color: #d5e1ee;
        line-height: 13px;
    }

    .used .box span {
        display: block;
        margin-top: -3px;
        text-align: right;
        color: #fff;
    }

    .level {
        position: absolute;
        left: 1px;
        right: 1px;
        bottom: 1px;
        height: 2px;
        background: #0d3038;
    }

    .level i {
        display: block;
        width: 72%;
        height: 2px;
        background: #43b6d2;
    }

    .box em {
        height: 10px;
        width: 5px;
        margin-top: 2px;
        background: #a4b0ba;
        clip-path: polygon(0 0, 100% 50%, 0 100%);
    }

    .box small {
        align-self: flex-end;
        font-size: 10px;
        line-height: 16px;
    }

    /* track list */
    .tracks {
        width: 194px;
        flex: none;
    }

    .thead {
        display: flex;
        align-items: center;
        gap: 2px;
        height: 23px;
        padding: 0 3px;
        background: #56687a;
    }

    .gh {
        width: 12px;
        height: 14px;
        border-radius: 2px;
        background: #7a8998;
        color: #364655;
        font: bold 10px/12px "DejaVu Sans", sans-serif;
    }

    .gh + .wd {
        margin-left: 1px;
    }

    .gh.wd { width: 21px; }
    .gh.nar { width: 11px; margin-left: 2px; }

    .nar i {
        width: 1px;
        height: 10px;
        background: #364655;
    }

    .gh:nth-child(2) {
        margin: 0 4px;
    }

    .tri::after {
        content: "";
        border: 4px solid transparent;
        border-top-color: #2c3b49;
        margin-top: 4px;
    }

    .gh.col {
        width: 20px;
        margin-left: auto;
    }

    .col b {
        width: 4px;
        height: 8px;
    }

    .r { background: #a33; }
    .g { background: #3a5; }
    .b { background: #33a; }

    .track {
        display: flex;
        height: 116px;
        border-bottom: 1px solid #3a4856;
        background: repeating-linear-gradient(#4a5c6e 0 2px, #475969 2px 4px);
    }

    .track.sel {
        background: #c5ccd4;
        color: #16202a;
    }

    .stripe {
        display: flex;
        justify-content: space-between;
        width: 29px;
        padding: 4px 2px 0;
        background: #6b89ac;
        border-right: 1px solid #2b3844;
        color: #0c1218;
    }

    .ctl {
        flex: 1;
        min-width: 0;
        padding: 2px 0 0 6px;
        overflow: hidden;
    }

    .ln {
        display: flex;
        align-items: center;
        gap: 1px;
        height: 18px;
        white-space: nowrap;
    }

    .ln b {
        font-size: 12px;
        color: #d8e0e8;
    }

    .sel .ln b {
        color: #10161c;
    }

    .lead {
        display: flex;
        gap: 1px;
        width: 49px;
        flex: none;
        color: #17212b;
    }

    .tk {
        width: 22px;
        height: 15px;
        border: 1px solid #3a444e;
        border-radius: 2px;
        background: #a9b1b9;
        color: #000;
        font: bold 10px/12px "DejaVu Sans", sans-serif;
    }

    .sel .tk {
        border-color: #6a737c;
        background: #e4e8ec;
    }

    .sel .act {
        background: #7fb0f4;
    }

    .track .orange {
        background: #f0b45c;
    }

    .sparse {
        gap: 4px;
    }

    .sparse .lead {
        width: 46px;
    }

    .rd {
        width: 16px;
        height: 16px;
        border: 1px solid #3a444e;
        border-radius: 8px;
        background: #b8c0c8;
        color: #000;
    }

    .sel .rd {
        background: #e8ecef;
    }

    .sel .red {
        background: #e0545a;
    }

    .sp {
        width: 14px;
        height: 14px;
        margin: 0 8px 0 3px;
    }

    .ee {
        margin-right: 2px;
        font: italic 14px/12px "Liberation Sans", sans-serif;
    }

    .vu {
        position: relative;
        width: 12px;
        background: #000;
    }

    .sel .vu::after {
        content: "";
        position: absolute;
        left: 1px;
        bottom: 1px;
        width: 10px;
        height: 4px;
        background: linear-gradient(90deg, #1cd0e4 45%, #000 45% 55%, #1cd0e4 55%);
    }

    .fxhead {
        display: flex;
        align-items: center;
        gap: 17px;
        height: 20px;
        background: #46525e;
        color: #10171e;
    }

    .fxhead span {
        display: flex;
        width: 38px;
        justify-content: flex-end;
        color: #c3ccd4;
    }

    .fx {
        margin-left: 11px;
        height: 115px;
    }

    .fx .stripe {
        background: #8f8199;
    }

    .fx .stripe .ic {
        color: #e8dff0;
        width: 10px;
    }

    .fx .ln {
        height: 17px;
    }

    .fx .ln b {
        margin-left: 4px;
        font-size: 11px;
    }

    .param {
        width: 100px;
        height: 14px;
        margin-left: 4px;
        padding-left: 3px;
        border: 1px solid #36414c;
        background: #a8b2bc;
        color: #000;
        line-height: 12px;
    }

    .param.num {
        width: 52px;
        padding-left: 13px;
    }

    /* arrangement */
    .arrange {
        display: flex;
        flex: 1;
        min-width: 0;
        flex-direction: column;
        border-left: 1px solid #202c38;
    }

    .ruler {
        flex: none;
        height: 23px;
        background: #5b87b6;
    }

    .ruler text {
        font: bold 12px "Liberation Sans", sans-serif;
        fill: #e8f2fa;
    }

    .lanes {
        flex: 1;
    }

    /* plug-in windows */
    .win {
        position: absolute;
        border: 3px solid #0a48e0;
        border-top: 0;
        border-radius: 4px 4px 0 0;
        background: #22303e;
    }

    .room { left: 320px; top: 266px; width: 925px; }
    .eqw { left: 610px; top: 506px; width: 795px; }
    .comp { left: 332px; top: 551px; width: 469px; }

    .title {
        display: flex;
        align-items: center;
        justify-content: space-between;
        height: 21px;
        margin: 0 -3px;
        padding: 1px 5px 0 2px;
        border-top: 1px solid #4b93ff;
        border-radius: 4px 4px 0 0;
        background: linear-gradient(#0a66f8, #005cf0 40%, #006cff);
    }

    .title h2 {
        margin: 0;
        font: bold 12px/16px "Liberation Mono", "Noto Sans CJK SC", monospace;
        color: #fff;
    }

    .close {
        width: 13px;
        height: 13px;
        border: 1px solid #fff;
        border-radius: 2px;
        background: #e0502c;
    }

    .plugbar {
        display: flex;
        align-items: center;
        gap: 7px;
        height: 23px;
        padding-left: 4px;
        background: linear-gradient(#222d38, #2b3742);
        border-bottom: 1px solid #4b5966;
    }

    .pair {
        display: flex;
        gap: 1px;
    }

    .mini {
        width: 22px;
        height: 13px;
        border-radius: 1px;
        background: #929ba4;
        color: #000;
        font: bold 10px/12px "DejaVu Sans", sans-serif;
    }

    .mini.blue {
        background: #86aef2;
    }

    .mini.sq {
        width: 15px;
        height: 14px;
    }

    .preset {
        display: flex;
        width: 134px;
        height: 18px;
        border: 1px solid #39434d;
        border-radius: 2px;
        background: #000;
        color: #e8e8e8;
    }

    .preset select {
        flex: 1;
        padding-left: 4px;
    }

    .preset span {
        display: grid;
        place-items: center;
        width: 18px;
        border-left: 1px solid #39434d;
    }

    .face {
        display: flex;
        gap: 8px;
        padding: 6px 7px 0;
        border-top: 3px solid #24313d;
        background: repeating-linear-gradient(transparent 0 2px, rgba(0, 0, 0, .1) 2px 3px), linear-gradient(#325070, #263d58 60%, #1b2a3a);
    }

    .rule {
        width: 2px;
        background: #14202e;
    }

    .labels {
        display: flex;
        justify-content: center;
        height: 15px;
        font: bold 10px/13px "Liberation Sans", sans-serif;
        color: #c3d0dd;
        white-space: nowrap;
    }

    .labels.left {
        justify-content: flex-start;
        padding-left: 2px;
    }

    .labels span {
        display: flex;
        justify-content: center;
        width: 60px;
    }

    .labels .mid {
        width: 30px;
    }

    .labels .dim {
        width: 30px;
        color: #7e8fa1;
    }

    .labels.on {
        background: #000;
        color: #8e989f;
    }

    .panel {
        display: flex;
        height: 66px;
        padding: 0 2px;
        border-radius: 2px;
        background: linear-gradient(#000 23px, #0d1a20 23px, #000 41px, transparent 41px);
    }

    /* tall bridge joins the three large knobs */
    .panel.bigs {
        width: 184px;
        background: linear-gradient(#000 23px, #0d1a20 23px, #000 41px, transparent 41px), linear-gradient(#000, #000) 50% 0 / 120px 51px no-repeat;
    }

    .cell {
        display: flex;
        flex-direction: column;
        align-items: center;
        width: 60px;
        flex: none;
    }

    .val {
        flex: none;
        height: 11px;
        line-height: 18px;
        color: #8db3d8;
        position: relative;
        z-index: 1;
    }

    .knob {
        display: grid;
        flex: none;
        place-items: center;
    }

    .knob > svg, .metal {
        grid-area: 1 / 1;
    }

    .metal {
        position: relative;
        width: 26px;
        height: 26px;
        border-radius: 50%;
        background: conic-gradient(#dfe4e8, #b8c0c8 30deg, #77838f 55deg, #a9b2ba 90deg, #e9edf0 130deg, #a8b0b8 175deg, #7b8792 215deg, #aab3bb 250deg, #dbe0e4 285deg, #98a2ac 320deg, #dfe4e8);
    }

    .big .metal {
        width: 34px;
        height: 34px;
    }

    .metal.off {
        background: conic-gradient(#6c6c70, #4a4b4e 60deg, #66676a 130deg, #3f4043 215deg, #5c5d60 285deg, #6c6c70);
    }

    .metal i {
        position: absolute;
        inset: 0;
    }

    .metal i::after {
        content: "";
        position: absolute;
        left: 50%;
        top: 3px;
        width: 3px;
        height: 3px;
        margin-left: -1px;
        border-radius: 50%;
        background: #2b3540;
    }

    .opts {
        display: flex;
        align-items: center;
        height: 14px;
        margin: 0 -2px 5px 0;
        padding-left: 6px;
    }

    .opts:last-child {
        margin-bottom: 4px;
    }

    .opts i {
        width: 60px;
    }

    .opts.tight {
        margin-top: 3px;
        padding-left: 3px;
    }

    .opt, .bn, .peakrms {
        display: flex;
        align-items: center;
        gap: 2px;
        width: 60px;
        font: italic 10px/14px "Liberation Sans Narrow", "Liberation Sans", sans-serif;
        color: #a0b0c0;
        white-space: nowrap;
    }

    .peakrms {
        width: 56px;
        justify-content: center;
    }

    .opt.far {
        width: 112px;
    }

    .opts .opt:only-child {
        width: 58px;
    }

    .opt input {
        width: 14px;
        height: 14px;
        flex: none;
        border: 3px solid #05080b;
        border-radius: 50%;
        background: conic-gradient(#eee, #777 90deg, #ddd 160deg, #555 230deg, #eee);
    }

    .opt input:checked {
        border: 2px solid #2a95bd;
        background: conic-gradient(#eee, #777 90deg, #ddd 160deg, #555 230deg, #eee) content-box, #05080b;
        padding: 2px;
    }

    .low {
        padding-top: 50px;
    }

    .col svg.blk, .dyn .blk, .space {
        display: block;
        background: #000;
        border-radius: 2px;
    }

    .labels.lcd {
        font-weight: normal;
        font-size: 9px;
        color: #101a26;
    }

    .peak {
        display: block;
        margin-top: 2px;
        font-size: 10px;
        color: #cc6072;
    }

    .room footer {
        display: flex;
        gap: 140px;
        height: 22px;
        padding-left: 31px;
        border-top: 1px solid #47596b;
        background: #151e28;
        font: italic bold 10px/21px "Liberation Sans", sans-serif;
        color: #6e7b87;
    }

    .eqw .face {
        gap: 12px;
    }

    .bands {
        width: 224px;
        flex: none;
    }

    .bands .labels {
        justify-content: flex-end;
        padding-right: 32px;
    }

    .brow {
        display: flex;
        height: 50px;
        padding-right: 2px;
    }

    .brow .opt {
        align-items: flex-start;
        width: 20px;
        padding-top: 8px;
    }

    .bands .panel {
        flex: 1;
        height: 50px;
        justify-content: flex-end;
    }

    .bands .labels:not(:first-child) {
        height: 14px;
    }

    .shape {
        width: 26px;
        margin-left: -5px;
        padding-top: 3px;
        color: #9cc0dc;
    }

    .bn {
        height: 14px;
        width: auto;
        justify-content: flex-end;
    }

    .graph {
        flex: 1;
        min-width: 0;
        margin-top: 15px;
    }

    .graph text {
        font: 10px "Liberation Sans", sans-serif;
        fill: #5f7d80;
        white-space: pre;
    }

    .graph .pt {
        fill: #a8b0b8;
    }

    .graph .pk {
        fill: #d8604c;
    }

    .dyn .lcd {
        justify-content: flex-start;
    }

    .dyn .lcd span {
        width: 20px;
    }

    .dyn .lcd span:nth-child(2) {
        margin-left: auto;
    }

    .reads {
        display: flex;
        justify-content: space-between;
        margin-top: 2px;
        padding: 0 1px 0 3px;
        font-size: 10px;
        color: #8db3d8;
    }

    .gr {
        margin-top: -4px;
        padding-right: 14px;
        text-align: right;
        font-size: 10px;
        color: #8db3d8;
    }

    .dyn .opts {
        margin: 0;
        padding-left: 114px;
    }
</style>
